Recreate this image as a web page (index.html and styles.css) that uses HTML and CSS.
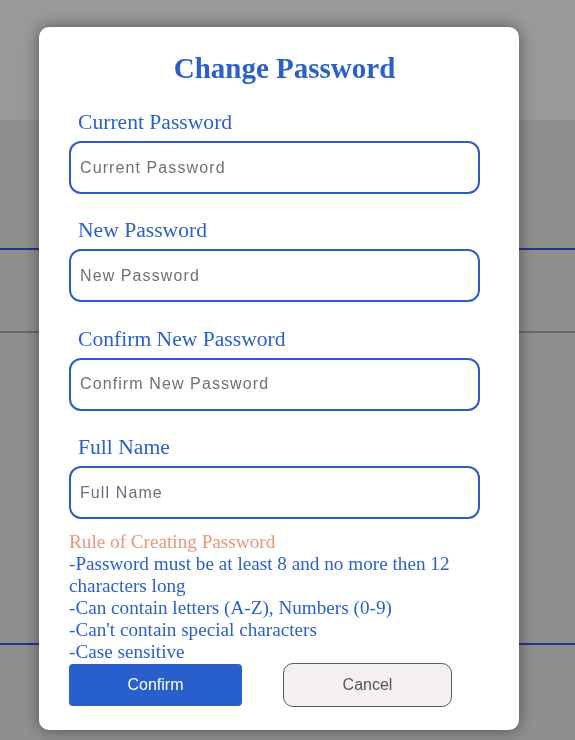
FILE: index.html
```html
<!DOCTYPE html>
<html lang="en">
<head>
<meta charset="utf-8">
<title>Change Password</title>
<link rel="stylesheet" href="styles.css">
</head>
<body>
<div class="page">
  <header class="page-header"></header>
  <section class="row row-a"></section>
  <section class="row row-b"></section>
  <section class="row row-c"></section>
</div>
<div class="overlay">
  <form class="modal">
    <h2 class="modal-title">Change Password</h2>
    <div class="field">
      <label class="field-label">Current Password</label>
      <input class="field-input" type="password" placeholder="Current Password">
    </div>
    <div class="field">
      <label class="field-label">New Password</label>
      <input class="field-input" type="password" placeholder="New Password">
    </div>
    <div class="field">
      <label class="field-label">Confirm New Password</label>
      <input class="field-input" type="password" placeholder="Confirm New Password">
    </div>
    <div class="field field-last">
      <label class="field-label">Full Name</label>
      <input class="field-input" type="text" placeholder="Full Name">
    </div>
    <div class="rules">
      <div class="rules-title">Rule of Creating Password</div>
      <div class="rules-line">-Password must be at least 8 and no more then 12 characters long</div>
      <div class="rules-line">-Can contain letters (A-Z), Numbers (0-9)</div>
      <div class="rules-line">-Can't contain special characters</div>
      <div class="rules-line">-Case sensitive</div>
    </div>
    <div class="actions">
      <button type="button" class="btn btn-confirm">Confirm</button>
      <button type="button" class="btn btn-cancel">Cancel</button>
    </div>
  </form>
</div>
</body>
</html>
```
FILE: styles.css
```css
* { box-sizing: border-box; }
html, body { margin: 0; padding: 0; }
body {
  width: 575px;
  height: 740px;
  overflow: hidden;
  font-family: "Liberation Serif", "Times New Roman", serif;
  background: #efeeec;
}
.page-header { height: 120px; background: #ffffff; }
.row { background: #efeeec; }
.row-a { height: 130px; border-bottom: 2px solid #3060dd; }
.row-b { height: 83px; border-bottom: 2px solid #b0b0b0; }
.row-c { height: 312px; border-bottom: 2px solid #3060dd; }

.overlay {
  position: fixed;
  inset: 0;
  background: rgba(0, 0, 0, 0.4);
  padding: 27px 0 0 39px;
}
.modal {
  width: 480px;
  background: #ffffff;
  border-radius: 10px;
  box-shadow: 0 0 16px rgba(0, 0, 0, 0.45);
  padding: 25px 39px 23px 30px;
  display: flex;
  flex-direction: column;
}
.modal-title {
  margin: 0 0 27px;
  padding-left: 20px;
  text-align: center;
  font-size: 29px;
  line-height: 33px;
  font-weight: bold;
  color: #2b5fca;
}
.field { display: flex; flex-direction: column; gap: 8px; margin-bottom: 26.4px; }
.field-label {
  padding-left: 9px;
  font-size: 21.6px;
  line-height: 21px;
  color: #2b5fca;
}
.field-input {
  width: 411px;
  height: 53px;
  border: 2px solid #2c5dc5;
  border-radius: 12px;
  padding: 0 9px;
  font-family: "Liberation Sans", Arial, sans-serif;
  font-size: 16px;
  letter-spacing: 1.1px;
  color: #333;
  background: #fff;
  outline: none;
}
.field-input::placeholder { color: #707070; }
.field-last { margin-bottom: 12px; }

.rules { font-size: 19.2px; line-height: 22px; color: #2b5fca; }
.rules-title { color: #e9967a; }

.actions {
  display: flex;
  align-items: center;
  gap: 41px;
}
.btn {
  font-family: "Liberation Sans", Arial, sans-serif;
  font-size: 16px;
  cursor: pointer;
}
.btn-confirm {
  width: 173px;
  height: 42px;
  border: none;
  border-radius: 4px;
  background: #275fcc;
  color: #ffffff;
}
.btn-cancel {
  width: 169px;
  height: 44px;
  border: 1px solid #5a5a5a;
  border-radius: 10px;
  background: #f4f0ef;
  color: #555555;
}
```
